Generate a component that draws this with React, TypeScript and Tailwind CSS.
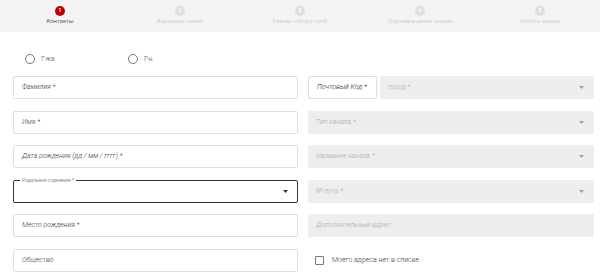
import React from "react";

const steps = [
  "Контакты",
  "Варианты линий",
  "Режим отбора проб",
  "Подтверждение заказа",
  "Оплата заказа",
];

const Caret = ({ dark }: { dark?: boolean }) => (
  <svg width="5" height="3" viewBox="0 0 5 3" className="shrink-0">
    <path d="M0 0 L5 0 L2.5 3 Z" fill={dark ? "#333" : "#a0a0a0"} />
  </svg>
);

const TextField = ({ label }: { label: string }) => (
  <div className="h-[23px] border border-[#dedede] rounded-[2px] bg-white flex items-center px-[8px]">
    <span className="text-[7px] font-light italic text-[#3a3a3a]">{label}</span>
  </div>
);

const GreyField = ({ label, select = true }: { label: string; select?: boolean }) => (
  <div className="h-[23px] rounded-[2px] bg-[#eeeeee] flex items-center justify-between pl-[8px] pr-[10px]">
    <span className="text-[7px] font-light italic text-[#aaaaaa]">{label}</span>
    {select && <Caret />}
  </div>
);

export default function App() {
  return (
    <div className="w-[600px] h-[273px] bg-white overflow-hidden" style={{ fontFamily: "Roboto, 'Liberation Sans', sans-serif" }}>
      <div className="h-[32px] bg-[#f4f4f4] grid grid-cols-5">
        {steps.map((s, i) => (
          <div key={s} className="flex flex-col items-center pt-[6px]">
            <div
              className={`w-[10px] h-[10px] rounded-full flex items-center justify-center text-[5px] font-bold text-white ${
                i === 0 ? "bg-[#c00000]" : "bg-[#dedede]"
              }`}
            >
              {i + 1}
            </div>
            <span className={`mt-[1px] text-[6px] leading-[8px] font-light ${i === 0 ? "text-[#222]" : "text-[#bdbdbd]"}`}>{s}</span>
          </div>
        ))}
      </div>

      <div className="flex items-center h-[16px] mt-[19px] pl-[25px]">
        <label className="flex items-center gap-[6px] w-[103px]">
          <span className="w-[10px] h-[10px] rounded-full border border-[#777]" />
          <span className="text-[7px] font-light text-[#555]">Г-жа</span>
        </label>
        <label className="flex items-center gap-[6px]">
          <span className="w-[10px] h-[10px] rounded-full border border-[#777]" />
          <span className="text-[7px] font-light text-[#555]">Г-н.</span>
        </label>
      </div>

      <div className="grid grid-cols-[285px_286px] gap-x-[10px] gap-y-[11.5px] pl-[13px] mt-[9px]">
        <TextField label="Фамилия *" />
        <div className="flex gap-[3px]">
          <div className="w-[69px] h-[23px] border border-[#dedede] rounded-[2px] flex items-center px-[8px]">
            <span className="text-[7px] font-light italic text-[#222] whitespace-nowrap">Почтовый Код *</span>
          </div>
          <div className="flex-1">
            <GreyField label="город *" />
          </div>
        </div>

        <TextField label="Имя *" />
        <GreyField label="Тип канала *" />

        <TextField label="Дата рождения (дд / мм / гггг) *" />
        <GreyField label="Название канала *" />

        <div className="relative h-[23px] border border-[#333] rounded-[2px] flex items-center justify-end pr-[9px]">
          <span className="absolute -top-[4px] left-[6px] bg-white px-[2px] text-[5px] leading-[6px] font-light italic text-[#555]">
            Родильное отделение *
          </span>
          <Caret dark />
        </div>
        <GreyField label="№ путь *" />

        <TextField label="Место рождения *" />
        <GreyField label="Дополнительный адрес" select={false} />

        <TextField label="Общество" />
        <div className="flex items-center h-[23px] pl-[7px] gap-[8px]">
          <span className="w-[9px] h-[9px] border border-[#777] rounded-[1px]" />
          <span className="text-[7px] font-light text-[#333]">Моего адреса нет в списке</span>
        </div>
      </div>
    </div>
  );
}
